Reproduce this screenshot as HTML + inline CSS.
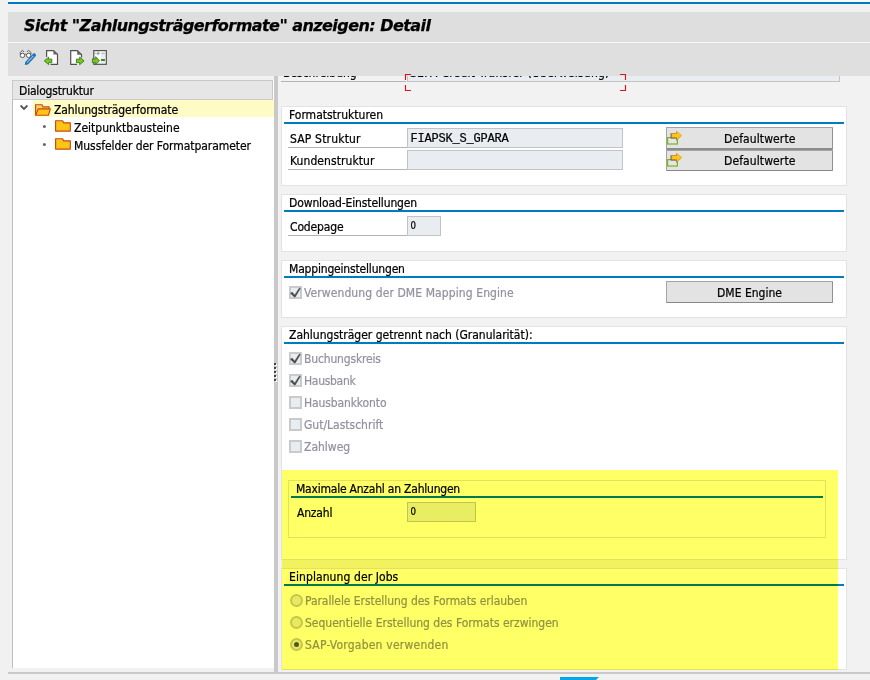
<!DOCTYPE html>
<html lang="de">
<head>
<meta charset="utf-8">
<title>Sicht "Zahlungsträgerformate" anzeigen: Detail</title>
<style>
html,body{margin:0;padding:0}
body{width:870px;height:680px;position:relative;overflow:hidden;background:#f1f1f1;
  font-family:"DejaVu Sans Condensed","Liberation Sans",sans-serif;font-size:12px;color:#000;line-height:16px}
.a{position:absolute}
.t{position:absolute;white-space:pre;line-height:16px;height:16px;-webkit-text-stroke:.22px currentColor}
.grp{position:absolute;background:#fff;border:1px solid #e3e3e3;box-sizing:border-box}
.bl{position:absolute;height:2px;background:#007ac0}
.ul{position:absolute;height:1px;background:#b4b4b4}
.fld{position:absolute;box-sizing:border-box;border:1px solid #c3c3c3;background:#e9edf1;height:20px}
.mono{font-family:"Liberation Mono","DejaVu Sans Mono",monospace;font-size:12px;letter-spacing:-0.2px}
.btn{position:absolute;box-sizing:border-box;height:22px;background:#e3e3e3;border:1px solid #a4a4a4;border-right-color:#909090;border-bottom-color:#888;border-radius:1px}
.dis{color:#9292a0}
.cb{position:absolute;width:13px;height:13px;box-sizing:border-box;border:2px solid #cacaca;background:#e8edf1}
.rb{position:absolute;width:13px;height:13px;box-sizing:border-box;border:2px solid #c5c5c5;border-radius:50%;background:#e9e9e9}
</style>
</head>
<body>
<!-- top -->
<div class="a" style="left:8px;top:0;width:862px;height:2px;background:#f9f9f9"></div>
<div class="a" style="left:8px;top:2px;width:862px;height:2px;background:#007ac0"></div>
<div class="a" style="left:8px;top:12px;width:862px;height:30px;background:#dedede"></div>
<div class="a" style="left:8px;top:42px;width:862px;height:1px;background:#f7f7f7"></div>
<div class="a" style="left:8px;top:43px;width:862px;height:33px;background:#dfdfdf"></div>
<div class="t" id="title" style="left:24px;top:14px;height:24px;line-height:24px;font-family:'DejaVu Sans','Liberation Sans',sans-serif;font-weight:bold;font-style:italic;font-size:16px;letter-spacing:-0.55px;-webkit-text-stroke:.25px #000">Sicht "Zahlungsträgerformate" anzeigen: Detail</div>

<!-- toolbar icons -->
<svg class="a" style="left:14px;top:44px" width="100" height="30" viewBox="0 0 100 30">
  <!-- glasses + pencil -->
  <g fill="none" stroke="#5a5a5a" stroke-width="1">
    <circle cx="8.5" cy="11.4" r="2.2" fill="#fff"/><circle cx="14.6" cy="11.4" r="2.2" fill="#fff"/>
    <path d="M6.3 10.6 V8.4 L8.5 6.3 L10 8 M12.9 8 L14.6 6.3 L16.9 8.4 V10.6 M10.6 10.8 Q11.55 9.8 12.5 10.8"/>
  </g>
  <path d="M19.3 9.6 Q20.6 8.6 21.6 9.9 Q22.6 11 21.6 12.2 L14 20.4 L10.8 21.1 L11.3 17.9 Z" fill="#1b73b4"/>
  <path d="M19.4 11.8 L13 18.7" stroke="#8cbce4" stroke-width="1.2" fill="none"/>
  <!-- page + left arrow -->
  <path d="M32.6 6.6 H39.5 L43.5 10.3 V20.3 H32.6 Z" fill="#fff"/>
  <path d="M32.6 13 V6.6 H39.5 L43.5 10.3 V20.3 H36.5" fill="none" stroke="#505050" stroke-width="1.2"/>
  <path d="M39.4 6.6 L43.5 10.5 H39.4 Z" fill="#666"/>
  <path d="M30.3 16.9 L34.6 13.1 V15.1 H37.8 V18.7 H34.6 V20.7 Z" fill="#7fc31c" stroke="#2f7f22" stroke-width=".9" stroke-linejoin="round"/>
  <!-- page + right arrow -->
  <path d="M56.7 6.6 H63.3 L67.5 10.6 V20.3 H56.7 Z" fill="#fff"/>
  <path d="M63 20.3 H56.7 V6.6 H63.3 L67.5 10.6 V13.5" fill="none" stroke="#505050" stroke-width="1.2"/>
  <path d="M63.2 6.6 L67.5 10.8 H63.2 Z" fill="#666"/>
  <path d="M70.1 16.9 L65.7 13.1 V15.1 H62.4 V18.7 H65.7 V20.7 Z" fill="#7fc31c" stroke="#2f7f22" stroke-width=".9" stroke-linejoin="round"/>
  <!-- list + arrow -->
  <rect x="79.8" y="6.6" width="12.5" height="13.7" fill="#fff" stroke="#505050" stroke-width="1.2"/>
  <rect x="87" y="10" width="4" height="9" fill="#ededed"/>
  <path d="M80.6 9.2 H84.6 M83.4 7.4 L85.4 9.2 L83.4 11 M87.1 9.2 H90.9" fill="none" stroke="#a4a4a4" stroke-width="1.1"/>
  <rect x="87.1" y="15" width="3.8" height="2" fill="#2f8a22"/>
  <path d="M85.5 16.8 L81.7 12.7 V14.9 H78.4 V18.7 H81.7 V20.6 Z" fill="#7fc31c" stroke="#2f7f22" stroke-width=".9" stroke-linejoin="round"/>
</svg>

<!-- left panel -->
<div class="a" style="left:12px;top:80px;width:262px;height:588px;background:#fff;border-left:1px solid #bdbdbd;box-sizing:border-box"></div>
<div class="a" style="left:12px;top:80px;width:261px;height:20px;background:#e6e6e6;border:1px solid #c9c9c9;box-sizing:border-box"></div>
<div class="t" style="left:19px;top:83px;letter-spacing:-0.185px">Dialogstruktur</div>
<div class="a" style="left:33px;top:100px;width:241px;height:17px;background:#fffbc4"></div>
<svg class="a" style="left:18px;top:100px" width="60" height="56" viewBox="0 0 60 56">
  <path d="M2.6 5.5 L6 8.9 L9.4 5.5" fill="none" stroke="#555" stroke-width="1.8"/>
  <!-- open folder -->
  <path d="M17.6 15.2 V4.7 H24 L25 6.9 H31 V8.8" fill="#fcd25e" stroke="#c24a14" stroke-width="1.15"/>
  <path d="M17.6 15.2 L20.3 8.8 H32.3 L30.5 15.2 Z" fill="#ffc414" stroke="#c24a14" stroke-width="1.15" stroke-linejoin="round"/>
  <!-- closed folders -->
  <circle cx="26.4" cy="26.4" r="1.5" fill="#666"/>
  <path d="M37.6 31.1 V20.7 H44.6 L45.6 22.8 H52.3 V31.1 Z" fill="#ffc414" stroke="#c24a14" stroke-width="1.15" stroke-linejoin="round"/>
  <circle cx="26.4" cy="44.5" r="1.5" fill="#666"/>
  <path d="M37.6 49.1 V38.7 H44.6 L45.6 40.8 H52.3 V49.1 Z" fill="#ffc414" stroke="#c24a14" stroke-width="1.15" stroke-linejoin="round"/>
</svg>
<div class="t" style="left:54px;top:102px;letter-spacing:-0.089px">Zahlungsträgerformate</div>
<div class="t" style="left:74px;top:120px">Zeitpunktbausteine</div>
<div class="t" style="left:74px;top:138px;letter-spacing:-0.052px">Mussfelder der Formatparameter</div>

<!-- splitter -->
<div class="a" style="left:274px;top:76px;width:4px;height:596px;background:#c9c9c9"></div>
<svg class="a" style="left:273px;top:362px" width="6" height="22" viewBox="0 0 6 22">
  <g fill="#fff"><rect x="2" y="2" width="2" height="2"/><rect x="2" y="6" width="2" height="2"/><rect x="2" y="10" width="2" height="2"/><rect x="2" y="14" width="2" height="2"/><rect x="2" y="18" width="2" height="2"/></g>
  <g fill="#444"><rect x="1" y="1" width="2" height="2"/><rect x="1" y="5" width="2" height="2"/><rect x="1" y="9" width="2" height="2"/><rect x="1" y="13" width="2" height="2"/><rect x="1" y="17" width="2" height="2"/></g>
</svg>

<!-- bottom line + logo fragment -->
<div class="a" style="left:8px;top:672px;width:862px;height:2px;background:#c9c9c9"></div>
<svg class="a" style="left:559px;top:676px" width="42" height="4" viewBox="0 0 42 4"><path d="M1 1 H40 L37 4 H1 Z" fill="#04a7e6"/></svg>

<!-- right content -->
<div class="a" id="right" style="left:278px;top:76px;width:592px;height:596px;background:#f2f2f2;overflow:hidden">
 <div class="a" style="left:-278px;top:-76px;width:870px;height:680px">

  <!-- clipped top row -->
  <div class="t" style="left:283px;top:64.5px">Beschreibung</div>
  <div class="ul" style="left:281px;top:81px;width:125px"></div>
  <div class="fld" style="left:407px;top:62px;width:433px"></div>
  <div class="t" style="left:410px;top:64.5px;letter-spacing:.23px">SEPA Credit Transfer (Überweisung)</div>

  <!-- group 1 -->
  <div class="grp" style="left:281px;top:106px;width:566px;height:80px"></div>
  <div class="t" style="left:289px;top:107px">Formatstrukturen</div>
  <div class="bl" style="left:284px;top:122px;width:560px"></div>
  <div class="t" style="left:290px;top:131px;letter-spacing:0.181px">SAP Struktur</div>
  <div class="ul" style="left:288px;top:147px;width:119px"></div>
  <div class="fld" style="left:407px;top:128px;width:216px"></div>
  <div class="t mono" style="left:410.5px;top:131px">FIAPSK_S_GPARA</div>
  <div class="t" style="left:290px;top:153px;letter-spacing:0.077px">Kundenstruktur</div>
  <div class="ul" style="left:288px;top:169px;width:119px"></div>
  <div class="fld" style="left:407px;top:150px;width:216px"></div>
  <div class="btn" style="left:666px;top:127px;width:167px;height:23px;border-bottom:2px solid #8c8c8c"></div>
  <div class="btn" style="left:666px;top:150px;width:167px;height:21px"></div>
  <div class="t" style="left:724px;top:131px;letter-spacing:0.105px">Defaultwerte</div>
  <div class="t" style="left:724px;top:153px;letter-spacing:0.105px">Defaultwerte</div>
  <svg class="a" style="left:666px;top:128px" width="20" height="42" viewBox="0 0 20 42">
    <g>
    <rect x="1.6" y="9.6" width="9.8" height="6.4" fill="#e6e6e6" stroke="#78b41e" stroke-width="1.2"/>
    <path d="M4.6 5.2 H10.2 V3.4 L15 8 L10 12.8 V10.5 H4.6 Z" fill="#4c4c58"/>
    <path d="M5.6 5.5 H10.6 V3.1 L15.9 7.5 L10.6 11.9 V9.5 H5.6 Z" fill="#ffc31e" stroke="#d49b10" stroke-width=".5"/>
    </g>
    <g transform="translate(0,22)">
    <rect x="1.6" y="9.6" width="9.8" height="6.4" fill="#e6e6e6" stroke="#78b41e" stroke-width="1.2"/>
    <path d="M4.6 5.2 H10.2 V3.4 L15 8 L10 12.8 V10.5 H4.6 Z" fill="#4c4c58"/>
    <path d="M5.6 5.5 H10.6 V3.1 L15.9 7.5 L10.6 11.9 V9.5 H5.6 Z" fill="#ffc31e" stroke="#d49b10" stroke-width=".5"/>
    </g>
  </svg>

  <!-- group 2 -->
  <div class="grp" style="left:281px;top:194px;width:566px;height:58px"></div>
  <div class="t" style="left:289px;top:195px;letter-spacing:-0.121px">Download-Einstellungen</div>
  <div class="bl" style="left:284px;top:210px;width:560px"></div>
  <div class="t" style="left:290px;top:219px;letter-spacing:-0.153px">Codepage</div>
  <div class="ul" style="left:288px;top:235px;width:119px"></div>
  <div class="fld" style="left:407px;top:216px;width:34px"></div>
  <div class="t" style="left:410.5px;top:218px;font-size:9.6px">0</div>

  <!-- group 3 -->
  <div class="grp" style="left:281px;top:260px;width:566px;height:58px"></div>
  <div class="t" style="left:289px;top:261px;letter-spacing:-0.180px">Mappingeinstellungen</div>
  <div class="bl" style="left:284px;top:276px;width:560px"></div>
  <div class="cb" style="left:289px;top:286px"></div>
  <div class="t dis" style="left:304px;top:285px;letter-spacing:0.094px">Verwendung der DME Mapping Engine</div>
  <div class="btn" style="left:666px;top:281px;width:167px"></div>
  <div class="t" style="left:666px;top:285px;width:167px;text-align:center">DME Engine</div>

  <!-- group 4 -->
  <div class="grp" style="left:281px;top:326px;width:566px;height:234px"></div>
  <div class="t" style="left:289px;top:327px">Zahlungsträger getrennt nach (Granularität):</div>
  <div class="bl" style="left:284px;top:342px;width:560px"></div>
  <div class="cb" style="left:289px;top:352px"></div>
  <div class="t dis" style="left:304px;top:351px;letter-spacing:-0.161px">Buchungskreis</div>
  <div class="cb" style="left:289px;top:374px"></div>
  <div class="t dis" style="left:304px;top:373px;letter-spacing:-0.298px">Hausbank</div>
  <div class="cb" style="left:289px;top:396px"></div>
  <div class="t dis" style="left:304px;top:395px;letter-spacing:-0.115px">Hausbankkonto</div>
  <div class="cb" style="left:289px;top:418px"></div>
  <div class="t dis" style="left:304px;top:417px">Gut/Lastschrift</div>
  <div class="cb" style="left:289px;top:440px"></div>
  <div class="t dis" style="left:304px;top:439px">Zahlweg</div>
  <svg class="a" style="left:289px;top:286px" width="13" height="102" viewBox="0 0 13 102">
    <path d="M1.4 7.3 L3.1 6.1 L5.7 8.9 L10.3 1.9 L11.4 2.6 L6.3 11 L5.2 11 Z" fill="#4a4a4a" stroke="#4a4a4a" stroke-width=".4" stroke-linejoin="round"/>
    <g transform="translate(0,66)"><path d="M1.4 7.3 L3.1 6.1 L5.7 8.9 L10.3 1.9 L11.4 2.6 L6.3 11 L5.2 11 Z" fill="#4a4a4a" stroke="#4a4a4a" stroke-width=".4" stroke-linejoin="round"/></g><g transform="translate(0,88)"><path d="M1.4 7.3 L3.1 6.1 L5.7 8.9 L10.3 1.9 L11.4 2.6 L6.3 11 L5.2 11 Z" fill="#4a4a4a" stroke="#4a4a4a" stroke-width=".4" stroke-linejoin="round"/></g>
  </svg>

  <!-- sub group -->
  <div class="a" style="left:288px;top:480px;width:538px;height:58px;border:1px solid #e3e3e3;box-sizing:border-box"></div>
  <div class="t" style="left:296px;top:481px;letter-spacing:-0.217px">Maximale Anzahl an Zahlungen</div>
  <div class="bl" style="left:291px;top:496px;width:532px"></div>
  <div class="t" style="left:297px;top:505px;letter-spacing:-0.177px">Anzahl</div>
  <div class="fld" style="left:407px;top:502px;width:69px"></div>
  <div class="t" style="left:410.5px;top:504px;font-size:9.6px">0</div>

  <!-- group 5 -->
  <div class="grp" style="left:281px;top:568px;width:566px;height:102px"></div>
  <div class="t" style="left:289px;top:569px;letter-spacing:0.091px">Einplanung der Jobs</div>
  <div class="bl" style="left:284px;top:584px;width:560px"></div>
  <div class="rb" style="left:290px;top:594px"></div>
  <div class="t dis" style="left:305px;top:593px;letter-spacing:-0.057px">Parallele Erstellung des Formats erlauben</div>
  <div class="rb" style="left:290px;top:616px"></div>
  <div class="t dis" style="left:305px;top:615px">Sequentielle Erstellung des Formats erzwingen</div>
  <div class="rb" style="left:290px;top:638px"></div>
  <div class="a" style="left:294px;top:642px;width:5px;height:5px;border-radius:50%;background:#555"></div>
  <div class="t dis" style="left:305px;top:637px;letter-spacing:0.224px">SAP-Vorgaben verwenden</div>

  <!-- yellow highlighter -->
  <div class="a" style="left:282px;top:470px;width:556px;height:200px;background:#ffff66;mix-blend-mode:multiply"></div>
 </div>
</div>

<!-- red screenshot markers -->
<svg class="a" style="left:404px;top:73px" width="224" height="20" viewBox="0 0 224 20">
  <path d="M1.5 7 V1.5 H7 M1.5 12 V17.5 H7 M216 1.5 H221.5 V7 M216 17.5 H221.5 V12" fill="none" stroke="#d8141e" stroke-width="1.15"/>
</svg>
</body>
</html>
